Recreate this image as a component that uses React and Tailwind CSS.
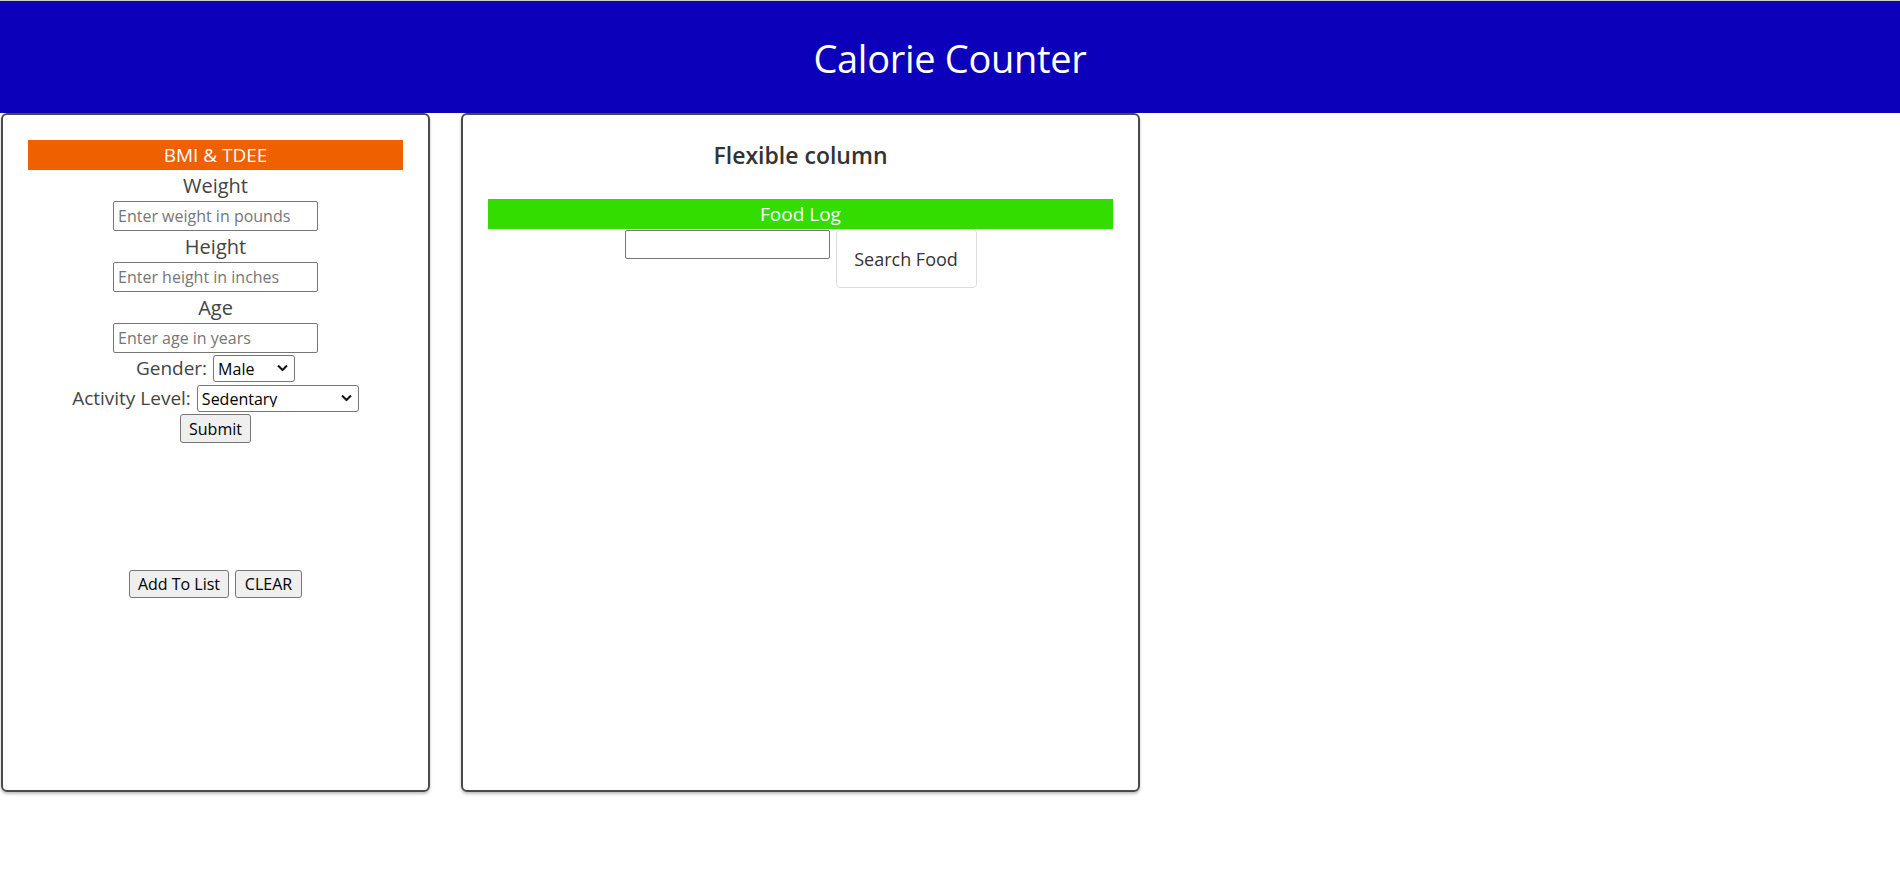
import React from 'react';

function Chevron() {
  return (
    <svg className="pointer-events-none absolute right-[7px] top-1/2 -translate-y-1/2" width="11" height="7" viewBox="0 0 11 7" fill="none">
      <path d="M1 1l4.5 4.5L10 1" stroke="#111" strokeWidth="2" />
    </svg>
  );
}

function Select({ width, options }) {
  return (
    <div className="relative inline-block" style={{ width }}>
      <select className="appearance-none w-full h-[27px] border border-[#767676] rounded-[3px] bg-white pl-[4px] pr-[20px] text-[16px] text-black leading-none outline-none">
        {options.map((o) => (
          <option key={o}>{o}</option>
        ))}
      </select>
      <Chevron />
    </div>
  );
}

function Field({ label, placeholder }) {
  return (
    <>
      <label className="h-[31px] leading-[31px] text-[20px] text-[#444]">{label}</label>
      <input
        className="w-[205px] h-[30px] border border-[#767676] rounded-[2px] px-[4px] text-[16px] placeholder:text-[#767676] outline-none"
        placeholder={placeholder}
      />
    </>
  );
}

const grayBtn = 'h-[28px] px-[7px] bg-[#efefef] border border-[#767676] rounded-[3px] text-[16px] text-black leading-none';

export default function App() {
  return (
    <div className="min-h-screen bg-white border-t border-[#cdcdcd] font-['Open_Sans',sans-serif]">
      {/* Header */}
      <header className="h-[112px] bg-[#0c00bb] flex items-center justify-center pt-[2px]">
        <h1 className="text-[38px] text-white tracking-[-0.3px]">Calorie Counter</h1>
      </header>

      <main className="flex gap-[31px] pl-px">
        {/* BMI & TDEE card */}
        <section className="w-[429px] h-[679px] border-2 border-[#4a4a4a] rounded-[6px] shadow-[0_2px_3px_rgba(0,0,0,0.25)] px-[25px] pt-[25px] flex flex-col items-center">
          <div className="w-full h-[30px] bg-[#ee6000] text-white text-[19px] flex items-center justify-center pt-px">BMI &amp; TDEE</div>
          <Field label="Weight" placeholder="Enter weight in pounds" />
          <Field label="Height" placeholder="Enter height in inches" />
          <Field label="Age" placeholder="Enter age in years" />
          <div className="h-[30px] flex items-center gap-[6px] text-[19px] text-[#444]">
            <span>Gender:</span>
            <Select width={82} options={['Male', 'Female']} />
          </div>
          <div className="h-[30px] flex items-center gap-[6px] text-[19px] text-[#444]">
            <span>Activity Level:</span>
            <Select width={162} options={['Sedentary', 'Lightly Active', 'Moderately Active', 'Very Active']} />
          </div>
          <button className={`${grayBtn} mt-px h-[29px] w-[71px]`}>Submit</button>
          <div className="mt-[127px] flex gap-[6px]">
            <button className={`${grayBtn} w-[100px]`}>Add To List</button>
            <button className={`${grayBtn} w-[67px]`}>CLEAR</button>
          </div>
        </section>

        {/* Flexible column card */}
        <section className="w-[679px] h-[679px] border-2 border-[#4a4a4a] rounded-[6px] shadow-[0_2px_3px_rgba(0,0,0,0.25)] px-[25px] pt-[25px] flex flex-col items-center">
          <h2 className="h-[29px] leading-[29px] mb-[30px] pt-px text-[23px] font-semibold text-[#333]">Flexible column</h2>
          <div className="w-full h-[30px] bg-[#33dd00] text-white text-[19px] flex items-center justify-center pt-px">Food Log</div>
          <div className="flex items-start gap-[6px]">
            <input className="mt-px w-[205px] h-[29px] border border-[#767676] rounded-[2px] px-[4px] text-[16px] outline-none" />
            <button className="w-[141px] h-[59px] bg-white border border-[#dcdcdc] rounded-[4px] text-[18px] text-[#333] pt-[2px]">Search Food</button>
          </div>
        </section>
      </main>
    </div>
  );
}
